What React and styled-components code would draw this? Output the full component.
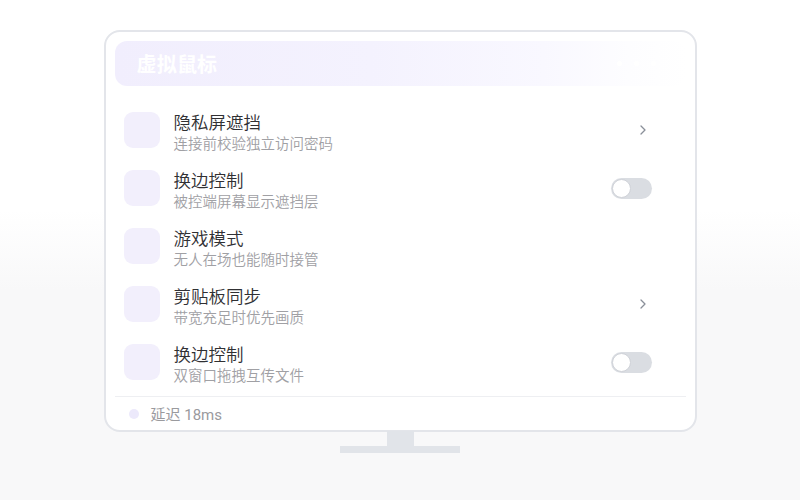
import React from "react";
import styled, { createGlobalStyle } from "styled-components";

const Global = createGlobalStyle`
  html, body { margin: 0; padding: 0; }
  body {
    width: 800px;
    height: 500px;
    overflow: hidden;
    font-family: Roboto, "Noto Sans CJK SC", sans-serif;
    background: linear-gradient(180deg, #ffffff 0%, #ffffff 42%, #f8f8f9 58%, #f8f8f9 100%);
  }
`;

const Page = styled.div`
  width: 800px;
  height: 500px;
  display: flex;
  flex-direction: column;
  align-items: center;
  padding-top: 30px;
  box-sizing: border-box;
`;

const Screen = styled.div`
  width: 593px;
  height: 402px;
  box-sizing: border-box;
  border: 2px solid #e3e5ea;
  border-radius: 16px;
  background: #ffffff;
  padding: 9px 9px 0 9px;
  display: flex;
  flex-direction: column;
`;

const Header = styled.div`
  height: 45px;
  flex-shrink: 0;
  border-radius: 12px;
  background: linear-gradient(90deg, #f1eefd 0%, #f4f2fe 45%, #f9f8ff 75%, #fdfdff 90%, #ffffff 100%);
  display: flex;
  align-items: center;
  justify-content: space-between;
  padding: 0 22px 0 22px;
  box-sizing: border-box;
`;

const Title = styled.div`
  color: #ffffff;
  font-size: 20px;
  font-weight: 700;
  letter-spacing: 0.2px;
`;

const Dots = styled.div`
  display: flex;
  gap: 12px;
  margin-right: 8px;
`;

const Dot = styled.span`
  width: 5px;
  height: 5px;
  border-radius: 50%;
  background: #ffffff;
`;

const List = styled.div`
  margin-top: 15px;
  display: flex;
  flex-direction: column;
`;

const Row = styled.div`
  height: 58px;
  box-sizing: border-box;
  display: flex;
  align-items: center;
  padding: 0 33px 0 9px;
`;

const IconBox = styled.div`
  width: 36px;
  height: 36px;
  border-radius: 9px;
  background: #f2effc;
  flex-shrink: 0;
`;

const Texts = styled.div`
  margin-left: 14px;
  flex: 1;
  display: flex;
  flex-direction: column;
  padding-top: 8px;
`;

const RowTitle = styled.div`
  font-size: 17.5px;
  line-height: 22px;
  font-weight: 350;
  color: #303033;
`;

const RowSub = styled.div`
  font-size: 14.5px;
  line-height: 22px;
  font-weight: 350;
  color: #a0a0a4;
`;

const Switch = styled.div`
  width: 41px;
  height: 21px;
  border-radius: 11px;
  background: #dadde2;
  position: relative;
  flex-shrink: 0;
  margin-right: 1px;
`;

const Knob = styled.span`
  position: absolute;
  left: 1px;
  top: 1px;
  width: 17px;
  height: 17px;
  border-radius: 50%;
  background: #ffffff;
  border: 1px solid #cfd2d8;
`;

const Chevron = styled.svg`
  width: 8px;
  height: 12px;
  flex-shrink: 0;
  margin-right: 6px;
`;

const Divider = styled.div`
  height: 1px;
  background: #eeeff2;
  margin-top: 5px;
`;

const Footer = styled.div`
  height: 33px;
  display: flex;
  align-items: center;
  padding-left: 14px;
  gap: 12px;
`;

const StatusDot = styled.span`
  width: 10px;
  height: 10px;
  border-radius: 50%;
  background: #ece9fb;
`;

const FooterText = styled.span`
  font-size: 15px;
  font-weight: 400;
  color: #9a9a9e;
`;

const Neck = styled.div`
  width: 27px;
  height: 15px;
  background: #e1e4e9;
  margin-top: -1px;
`;

const Base = styled.div`
  width: 120px;
  height: 7px;
  background: #e1e4e9;
`;

const rows = [
  { title: "隐私屏遮挡", sub: "连接前校验独立访问密码", kind: "chevron" },
  { title: "换边控制", sub: "被控端屏幕显示遮挡层", kind: "switch" },
  { title: "游戏模式", sub: "无人在场也能随时接管", kind: "none" },
  { title: "剪贴板同步", sub: "带宽充足时优先画质", kind: "chevron" },
  { title: "换边控制", sub: "双窗口拖拽互传文件", kind: "switch" },
];

export default function App() {
  return (
    <>
      <Global />
      <Page>
        <Screen>
          <Header>
            <Title>虚拟鼠标</Title>
            <Dots>
              <Dot />
              <Dot />
              <Dot />
            </Dots>
          </Header>
          <List>
            {rows.map((r, i) => (
              <Row key={i}>
                <IconBox />
                <Texts>
                  <RowTitle>{r.title}</RowTitle>
                  <RowSub>{r.sub}</RowSub>
                </Texts>
                {r.kind === "switch" && (
                  <Switch>
                    <Knob />
                  </Switch>
                )}
                {r.kind === "chevron" && (
                  <Chevron viewBox="0 0 8 12">
                    <path d="M2 2 L6 6 L2 10" fill="none" stroke="#8a8f99" strokeWidth="1.3" strokeLinecap="round" strokeLinejoin="round" />
                  </Chevron>
                )}
              </Row>
            ))}
          </List>
          <Divider />
          <Footer>
            <StatusDot />
            <FooterText>延迟 18ms</FooterText>
          </Footer>
        </Screen>
        <Neck />
        <Base />
      </Page>
    </>
  );
}
